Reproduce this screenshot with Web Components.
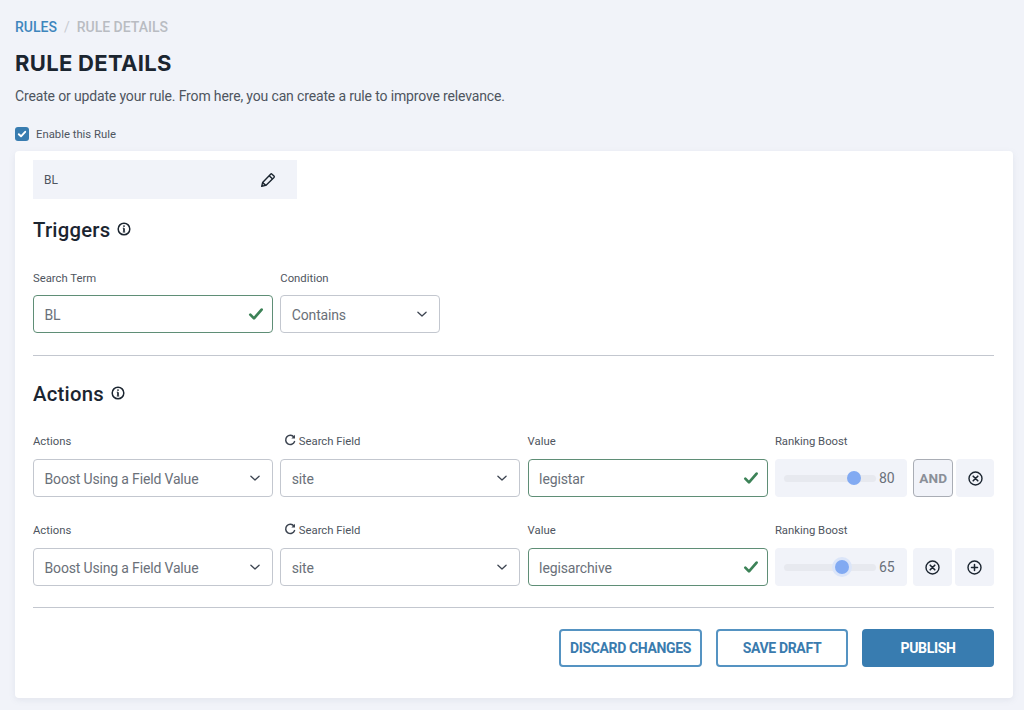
<!DOCTYPE html>
<html>
<head>
<meta charset="utf-8">
<title>Rule Details</title>
<style>
	html, body { margin: 0; padding: 0; background: #f1f3f9; }
	body { font-family: Roboto, "Liberation Sans", sans-serif; color: #1b2530; height: 710px; overflow: hidden; }
</style>
</head>
<body>
<rule-page></rule-page>

<script>
const FONT = 'Roboto, "Liberation Sans", sans-serif';

const ICONS = {
	chevron: '<svg width="12" height="12" viewBox="0 0 12 12" fill="none" stroke="#3c4450" stroke-width="1.3" stroke-linecap="round" stroke-linejoin="round"><path d="M1.9 4.2 6 8 10.1 4.2"/></svg>',
	check: '<svg width="16" height="14" viewBox="0 0 16 14" fill="none" stroke="#3c8257" stroke-width="2.7" stroke-linecap="round" stroke-linejoin="round"><path d="M2.3 7.6 6 11.4 13.6 2.6"/></svg>',
	info: '<svg width="14" height="14" viewBox="0 0 14 14" fill="none" stroke="#1b2530" stroke-width="1.5"><circle cx="7" cy="7" r="5.8"/><path d="M7 6.2v3.6" stroke-width="1.7"/><path d="M5.8 10h2.4M5.8 6.2H7" stroke-width="1"/><circle cx="7" cy="4.1" r=".9" fill="#1b2530" stroke="none"/></svg>',
	pencil: '<svg width="16" height="16" viewBox="0 0 16 16" fill="none" stroke="#1b2530" stroke-width="1.4" stroke-linejoin="round"><path d="M1.7 14.3 2.6 10.6 10.6 2.2a1 1 0 0 1 1.4 0l2 1.9a1 1 0 0 1 0 1.4L5.8 13.4z"/><path d="M9.2 3.7 12.6 7M2.6 10.6l3.2 2.8"/></svg>',
	refresh: '<svg width="12" height="12" viewBox="0 0 12 12" fill="none"><path d="M10 3.2A4.6 4.6 0 1 0 10.6 7.6" stroke="#3c4450" stroke-width="1.5" stroke-linecap="round"/><path d="M11 .8v3.6H7.4z" fill="#3c4450"/></svg>',
	close: '<svg width="15" height="15" viewBox="0 0 15 15" fill="none" stroke="#1b2530" stroke-width="1.4" stroke-linecap="round"><circle cx="7.5" cy="7.5" r="6.5"/><path d="M5.2 5.2l4.6 4.6M9.8 5.2l-4.6 4.6" stroke-width="1.6"/></svg>',
	plus: '<svg width="15" height="15" viewBox="0 0 15 15" fill="none" stroke="#1b2530" stroke-width="1.4" stroke-linecap="round"><circle cx="7.5" cy="7.5" r="6.5"/><path d="M7.5 4.5v6M4.5 7.5h6" stroke-width="1.5"/></svg>',
	tick: '<svg width="10" height="10" viewBox="0 0 10 10" fill="none" stroke="#fff" stroke-width="1.9" stroke-linecap="round" stroke-linejoin="round"><path d="M1.8 5.2 4 7.3 8.2 2.8"/></svg>'
};

// small helper so each element just gives its css and markup
function define(name, css, html) {
	customElements.define(name, class extends HTMLElement {
		constructor() {
			super();
			const shadowRoot = this.attachShadow({ mode: 'open' });
			shadowRoot.innerHTML = `<style>${css}</style>` + (typeof html === 'function' ? html(this) : html);
		}
	});
}

define('rs-select', `
	:host { display: flex; align-items: center; justify-content: space-between; box-sizing: border-box; height: 38px;
		background: #fff; border: 1px solid #c3c7cf; border-radius: 4px; padding: 0 11px 0 10.5px;
		font: 14px ${FONT}; color: #6a7079; letter-spacing: -.16px; }
	span { margin-top: 1px; }
	svg { display: block; }
`, el => `<span>${el.getAttribute('value')}</span>${ICONS.chevron}`);

define('rs-input', `
	:host { display: flex; align-items: center; justify-content: space-between; box-sizing: border-box; height: 38px;
		background: #fff; border: 1px solid #5f8e76; border-radius: 4px; padding: 0 8px 0 10.5px;
		font: 14px ${FONT}; color: #6a7079; letter-spacing: -.12px; }
	span { margin-top: 1px; }
	svg { display: block; }
`, el => `<span>${el.getAttribute('value')}</span>${ICONS.check}`);

define('rs-field', `
	:host { display: block; min-width: 0; }
	.label { display: flex; align-items: center; gap: 3px; height: 14px; margin-bottom: var(--label-gap, 11px);
		font: 11.3px ${FONT}; color: #4e5560; white-space: nowrap; }
	svg { display: block; margin: -3px 0 0 3.5px; }
`, el => `<div class="label">${el.hasAttribute('refresh') ? ICONS.refresh : ''}<span>${el.getAttribute('label')}</span></div><slot></slot>`);

define('rs-slider', `
	:host { display: flex; align-items: center; box-sizing: border-box; height: 38px; background: #f1f3f9;
		border-radius: 4px; padding: 0 13px 0 9px; gap: 3px; font: 14px ${FONT}; color: #6a7079; }
	.track { position: relative; width: 92px; height: 7px; background: #e7e9ef; border-radius: 4px; flex: none; }
	.thumb { position: absolute; top: 50%; width: 14px; height: 14px; margin: -7px 0 0 -7px; border-radius: 50%; background: #82aaf2; }
	:host([focus]) .thumb { box-shadow: 0 0 0 3px #dbe5f9; }
	.val { flex: 1; text-align: right; }
`, el => `<div class="track"><div class="thumb" style="left:${el.getAttribute('at')}px"></div></div><span class="val">${el.getAttribute('value')}</span>`);

define('rs-icon-btn', `
	:host { display: flex; flex: 1; align-items: center; justify-content: center; box-sizing: border-box; height: 38px;
		background: #f1f3f9; border-radius: 4px; }
	:host([outlined]) { border: 1px solid #a9adb5; font: 700 13.6px ${FONT}; color: #8a8f98; letter-spacing: .2px; }
	svg { display: block; }
`, el => el.hasAttribute('icon') ? ICONS[el.getAttribute('icon')] : '<slot></slot>');

define('rs-button', `
	:host { display: flex; align-items: center; justify-content: center; box-sizing: border-box; height: 38px;
		border: 2px solid #5593c2; border-radius: 4px; background: #fff; color: #3a7bae;
		font: 700 14px ${FONT}; letter-spacing: -.35px; white-space: nowrap; }
	:host([primary]) { background: #387cb0; border-color: #387cb0; color: #fff; }
`, '<slot></slot>');

define('rs-heading', `
	:host { display: flex; align-items: center; gap: 7px; font: 500 20.3px ${FONT}; color: #1b2530; height: 24px; letter-spacing: .25px; }
	svg { display: block; margin-top: -2px; }
`, () => `<slot></slot>${ICONS.info}`);

define('rs-action-row', `
	:host { display: grid; grid-template-columns: 240px 240px 240px 132px 1fr; column-gap: 7.3px; }
	.btns { display: flex; gap: 3px; align-self: end; margin-left: -.8px; }
`, el => {
	const first = !el.hasAttribute('last');
	return `
	<rs-field label="Actions"><rs-select value="Boost Using a Field Value"></rs-select></rs-field>
	<rs-field label="Search Field" refresh><rs-select value="site"></rs-select></rs-field>
	<rs-field label="Value"><rs-input value="${el.getAttribute('value')}"></rs-input></rs-field>
	<rs-field label="Ranking Boost"><rs-slider value="${el.getAttribute('boost')}" at="${el.getAttribute('at')}" ${first ? '' : 'focus'}></rs-slider></rs-field>
	<div class="btns">${first
		? '<rs-icon-btn outlined>AND</rs-icon-btn><rs-icon-btn icon="close"></rs-icon-btn>'
		: '<rs-icon-btn icon="close"></rs-icon-btn><rs-icon-btn icon="plus"></rs-icon-btn>'}</div>`;
});

define('rule-page', `
	:host { display: block; padding: 19px 11px 0 15px; }
	.crumbs { display: flex; gap: 7px; height: 16px; align-items: center; font: 500 14px ${FONT}; color: #b9bcc2; }
	.crumbs b { font-weight: 500; color: #3e86bd; }
	.crumbs i { font-style: normal; color: #c8cbd1; font-weight: 400; }
	h1 { margin: 16px 0 0; font: 700 22px/24px Inter, ${FONT}; color: #1b2530; letter-spacing: .3px; }
	p { margin: 13px 0 0; font: 14px/17px ${FONT}; color: #4e5560; letter-spacing: -.15px; }
	.enable { display: flex; align-items: center; gap: 7px; margin-top: 22px; height: 14px; font: 11.3px ${FONT}; color: #4e5560; }
	.box { display: flex; align-items: center; justify-content: center; width: 14px; height: 14px; background: #387cb0; border-radius: 3px; }
	.card { margin-top: 10px; height: 547px; box-sizing: border-box; background: #fff; border-radius: 4px; padding: 9px 19px 0 18px;
		box-shadow: 0 2px 6px rgba(120,130,160,.12); }
	.name { display: flex; align-items: center; justify-content: space-between; box-sizing: border-box; width: 264px; height: 39px;
		background: #f1f3f9; padding: 1px 21px 0 11px; font: 12px ${FONT}; color: #4e5560; }
	.name svg { display: block; margin-top: -1px; }
	.triggers { margin-top: 19px; }
	.trig-row { display: grid; grid-template-columns: 240px 160px; column-gap: 7.3px; margin-top: 29px; --label-gap: 10px; }
	hr { border: 0; height: 1px; background: #c3c7cf; margin: 22px 0 0; }
	.actions-head { margin-top: 26px; }
	.first { margin-top: 28px; }
	.second { margin-top: 26px; }
	hr.end { margin-top: 21px; }
	.footer { display: flex; justify-content: flex-end; gap: 14px; margin-top: 21px; }
	.discard { width: 143px; } .save { width: 132px; } .publish { width: 132px; }
`, () => `
	<div class="crumbs"><b>RULES</b><i>/</i><span>RULE DETAILS</span></div>
	<h1>RULE DETAILS</h1>
	<p>Create or update your rule. From here, you can create a rule to improve relevance.</p>
	<div class="enable"><span class="box">${ICONS.tick}</span><span>Enable this Rule</span></div>
	<div class="card">
		<div class="name"><span>BL</span>${ICONS.pencil}</div>
		<rs-heading class="triggers">Triggers</rs-heading>
		<div class="trig-row">
			<rs-field label="Search Term"><rs-input value="BL"></rs-input></rs-field>
			<rs-field label="Condition"><rs-select value="Contains"></rs-select></rs-field>
		</div>
		<hr>
		<rs-heading class="actions-head">Actions</rs-heading>
		<rs-action-row class="first" value="legistar" boost="80" at="70"></rs-action-row>
		<rs-action-row class="second" value="legisarchive" boost="65" at="58" last></rs-action-row>
		<hr class="end">
		<div class="footer">
			<rs-button class="discard">DISCARD CHANGES</rs-button>
			<rs-button class="save">SAVE DRAFT</rs-button>
			<rs-button class="publish" primary>PUBLISH</rs-button>
		</div>
	</div>
`);
</script>
</body>
</html>
